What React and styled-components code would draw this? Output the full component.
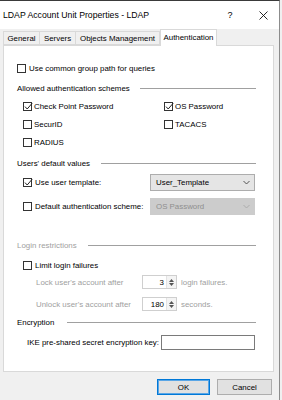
import React from 'react';
import styled, { createGlobalStyle } from 'styled-components';

const Global = createGlobalStyle`
  html, body { margin: 0; padding: 0; background: #f0f0f0; }
  body { font-family: "Liberation Sans", Arial, sans-serif; }
  #root { width: 282px; height: 400px; overflow: hidden; }
`;

const Window = styled.div`
  width: 280px;
  height: 400px;
  box-sizing: border-box;
  background: #f0f0f0;
  border-top: 1px solid #3a3a3a;
  border-right: 1px solid #8c8c8c;
  display: flex;
  flex-direction: column;
  font-size: 7.9px;
  color: #000;
`;

const TitleBar = styled.div`
  height: 28px;
  background: #fff;
  display: flex;
  align-items: center;
  padding-left: 3px;
`;

const Title = styled.div`
  flex: 1;
  font-size: 8.7px;
  color: #000;
`;

const TitleButton = styled.div`
  width: ${p => p.w}px;
  display: flex;
  justify-content: center;
  align-items: center;
  font-size: 9px;
`;

const TabStrip = styled.div`
  height: 16px;
  display: flex;
  align-items: flex-end;
  padding-left: 3px;
  position: relative;
  z-index: 1;
`;

const Tab = styled.div`
  box-sizing: border-box;
  width: ${p => p.w}px;
  height: ${p => (p.active ? 17 : 14)}px;
  margin-bottom: ${p => (p.active ? -1 : 0)}px;
  background: ${p => (p.active ? '#fff' : '#f0f0f0')};
  border: 1px solid #d9d9d9;
  border-bottom: ${p => (p.active ? 'none' : '1px solid #d9d9d9')};
  border-left: ${p => (p.first || p.active ? '1px solid #d9d9d9' : 'none')};
  display: flex;
  align-items: ${p => (p.active ? 'flex-start' : 'center')};
  padding-top: ${p => (p.active ? 3 : 0)}px;
  justify-content: center;
  color: #000;
`;

const Panel = styled.div`
  box-sizing: border-box;
  margin-left: 3px;
  width: 271px;
  height: 327px;
  background: #fff;
  border: 1px solid #d9d9d9;
  padding-top: 14px;
  display: flex;
  flex-direction: column;
`;

const Row = styled.div`
  display: flex;
  align-items: center;
  height: ${p => p.h || 16}px;
  margin-top: ${p => p.mt || 0}px;
  padding-left: ${p => p.indent || 0}px;
  color: ${p => (p.disabled ? '#a0a0a0' : '#000')};
`;

const Cell = styled.div`
  display: flex;
  align-items: center;
  width: ${p => (p.w ? `${p.w}px` : 'auto')};
  flex: ${p => (p.w ? 'none' : '1')};
`;

const Box = styled.div`
  box-sizing: border-box;
  width: 9px;
  height: 9px;
  border: 1px solid #333;
  background: #fff;
  margin-right: ${p => p.gap}px;
  position: relative;
  flex: none;
`;

const Tick = styled.svg`
  position: absolute;
  left: -1px;
  top: -2px;
  overflow: visible;
`;

const Heading = styled.div`
  display: flex;
  align-items: center;
  height: 16px;
  margin-top: ${p => p.mt || 0}px;
  padding-left: 13px;
  padding-right: 17px;
  color: ${p => (p.disabled ? '#a0a0a0' : '#000')};
`;

const Rule = styled.div`
  flex: 1;
  height: 1px;
  background: #a0a0a0;
  margin-left: ${p => p.gap}px;
`;

const Dropdown = styled.div`
  box-sizing: border-box;
  width: 105px;
  height: 17px;
  border: 1px solid ${p => (p.disabled ? '#cccccc' : '#adadad')};
  background: ${p => (p.disabled ? '#cccccc' : '#e5e5e5')};
  color: ${p => (p.disabled ? '#8f8f8f' : '#000')};
  display: flex;
  align-items: center;
  padding-left: 5px;
  padding-right: 4px;
`;

const DropText = styled.div`
  flex: 1;
`;

const Spinner = styled.div`
  box-sizing: border-box;
  width: 35px;
  height: 14px;
  border: 1px solid #cfcfcf;
  background: #fff;
  display: flex;
  color: #000;
`;

const SpinValue = styled.div`
  flex: 1;
  display: flex;
  align-items: center;
  justify-content: flex-end;
  padding-right: 2px;
`;

const SpinArrows = styled.div`
  width: 9px;
  display: flex;
  flex-direction: column;
  justify-content: center;
  align-items: center;
  gap: 1px;
  border-left: 1px solid #e3e3e3;
  background: #f4f4f4;
`;

const TextInput = styled.div`
  box-sizing: border-box;
  width: 94px;
  height: 15px;
  border: 1px solid #7a7a7a;
  background: #fff;
`;

const Footer = styled.div`
  display: flex;
  justify-content: flex-end;
  gap: 7px;
  padding-right: 7px;
  margin-top: 7px;
`;

const Button = styled.div`
  box-sizing: border-box;
  width: ${p => p.w}px;
  height: 16px;
  background: #e1e1e1;
  border: 1px solid ${p => (p.primary ? '#0078d7' : '#adadad')};
  box-shadow: ${p => (p.primary ? 'inset 0 0 0 1px #5aa6e6' : 'none')};
  display: flex;
  align-items: center;
  justify-content: center;
  color: #000;
`;

const Check = ({ checked, gap = 2 }) => (
  <Box gap={gap}>
    {checked && (
      <Tick width="10" height="10" viewBox="0 0 10 10">
        <path d="M2 5.6 L4.2 8 L9.2 2.2" fill="none" stroke="#222" strokeWidth="1" />
      </Tick>
    )}
  </Box>
);

const Chevron = ({ color }) => (
  <svg width="7" height="5" viewBox="0 0 7 5">
    <path d="M0.5 1 L3.5 4 L6.5 1" fill="none" stroke={color} strokeWidth="0.9" />
  </svg>
);

const Arrow = ({ up }) => (
  <svg width="5" height="3" viewBox="0 0 5 3">
    <path d={up ? 'M0 3 L2.5 0 L5 3 Z' : 'M0 0 L2.5 3 L5 0 Z'} fill="#555" />
  </svg>
);

const CloseIcon = () => (
  <svg width="9" height="9" viewBox="0 0 9 9">
    <path d="M0.5 0.5 L8.5 8.5 M8.5 0.5 L0.5 8.5" stroke="#111" strokeWidth="0.9" fill="none" />
  </svg>
);

const Section = ({ label, gap = 10, mt, disabled }) => (
  <Heading mt={mt} disabled={disabled}>
    <span>{label}</span>
    <Rule gap={gap} />
  </Heading>
);

const SpinRow = ({ label, value, unit, mt }) => (
  <Row indent={32} mt={mt} disabled>
    <Cell w={106}>{label}</Cell>
    <Spinner>
      <SpinValue>{value}</SpinValue>
      <SpinArrows>
        <Arrow up />
        <Arrow />
      </SpinArrows>
    </Spinner>
    <Cell w={60} style={{ marginLeft: 4 }}>{unit}</Cell>
  </Row>
);

export default function App() {
  return (
    <>
      <Global />
      <Window>
        <TitleBar>
          <Title>LDAP Account Unit Properties - LDAP</Title>
          <TitleButton w={16}>?</TitleButton>
          <TitleButton w={18} style={{ marginLeft: 16, marginRight: 7 }}>
            <CloseIcon />
          </TitleButton>
        </TitleBar>
        <TabStrip>
          <Tab w={37} first>General</Tab>
          <Tab w={36}>Servers</Tab>
          <Tab w={84}>Objects Management</Tab>
          <Tab w={57} active>Authentication</Tab>
        </TabStrip>
        <Panel>
          <Row indent={13}>
            <Check gap={3} />
            Use common group path for queries
          </Row>
          <Section label="Allowed authentication schemes" mt={4} />
          <Row indent={19} mt={2}>
            <Cell w={141}><Check checked />Check Point Password</Cell>
            <Cell><Check checked />OS Password</Cell>
          </Row>
          <Row indent={19} mt={2}>
            <Cell w={141}><Check />SecurID</Cell>
            <Cell><Check />TACACS</Cell>
          </Row>
          <Row indent={19} mt={2}>
            <Cell><Check />RADIUS</Cell>
          </Row>
          <Section label="Users' default values" mt={5} gap={11} />
          <Row indent={19} mt={3} h={17}>
            <Cell w={127}><Check checked gap={3} />Use user template:</Cell>
            <Dropdown>
              <DropText>User_Template</DropText>
              <Chevron color="#444" />
            </Dropdown>
          </Row>
          <Row indent={19} mt={7} h={17}>
            <Cell w={127}><Check gap={3} />Default authentication scheme:</Cell>
            <Dropdown disabled>
              <DropText>OS Password</DropText>
              <Chevron color="#a8a8a8" />
            </Dropdown>
          </Row>
          <Section label="Login restrictions" mt={22} gap={11} disabled />
          <Row indent={19} mt={4}>
            <Cell><Check gap={3} />Limit login failures</Cell>
          </Row>
          <SpinRow label="Lock user's account after" value="3" unit="login failures." mt={1} />
          <SpinRow label="Unlock user's account after" value="180" unit="seconds." mt={6} />
          <Section label="Encryption" mt={2} gap={13} />
          <Row indent={23} mt={4}>
            <Cell w={134}>IKE pre-shared secret encryption key:</Cell>
            <TextInput />
          </Row>
        </Panel>
        <Footer>
          <Button w={53} primary>OK</Button>
          <Button w={55}>Cancel</Button>
        </Footer>
      </Window>
    </>
  );
}
